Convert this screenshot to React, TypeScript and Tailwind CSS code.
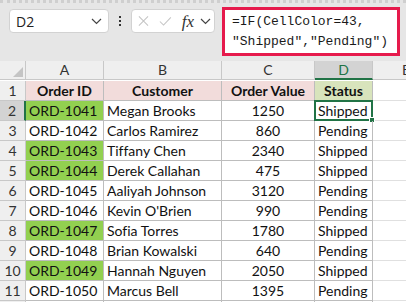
import React from 'react';

const rows = [
  { id: 'ORD-1041', name: 'Megan Brooks', value: 1250, status: 'Shipped', green: true },
  { id: 'ORD-1042', name: 'Carlos Ramirez', value: 860, status: 'Pending', green: false },
  { id: 'ORD-1043', name: 'Tiffany Chen', value: 2340, status: 'Shipped', green: true },
  { id: 'ORD-1044', name: 'Derek Callahan', value: 475, status: 'Shipped', green: true },
  { id: 'ORD-1045', name: 'Aaliyah Johnson', value: 3120, status: 'Pending', green: false },
  { id: 'ORD-1046', name: "Kevin O'Brien", value: 990, status: 'Pending', green: false },
  { id: 'ORD-1047', name: 'Sofia Torres', value: 1780, status: 'Shipped', green: true },
  { id: 'ORD-1048', name: 'Brian Kowalski', value: 640, status: 'Pending', green: false },
  { id: 'ORD-1049', name: 'Hannah Nguyen', value: 2050, status: 'Shipped', green: true },
  { id: 'ORD-1050', name: 'Marcus Bell', value: 1395, status: 'Pending', green: false },
];

const Chevron = () => (
  <svg width="11" height="7" viewBox="0 0 11 7" fill="none">
    <path d="M1 1l4.5 4.5L10 1" stroke="#444" strokeWidth="1.2" />
  </svg>
);

const FormulaBar = () => (
  <div className="h-[61px] bg-[#e6e6e6] border-t-[3px] border-dotted border-[#cfcfcf] flex items-start pl-[9px] pt-[1px]">
    {/* Name box */}
    <div className="mt-[5px] w-[100px] h-[24px] bg-white rounded-[4px] border border-[#d2d2d2] flex items-center justify-between pl-[6px] pr-[6px]">
      <span className="text-[14px] text-[#222] font-['Open_Sans',sans-serif]">D2</span>
      <Chevron />
    </div>

    {/* more dots */}
    <div className="w-[22px] h-[24px] mt-[5px] flex flex-col items-center justify-center gap-[2px]">
      <div className="w-[2px] h-[2px] bg-[#333]" />
      <div className="w-[2px] h-[2px] bg-[#333]" />
      <div className="w-[2px] h-[2px] bg-[#333]" />
    </div>

    {/* cancel / enter / fx */}
    <div className="mt-[5px] w-[84px] h-[24px] bg-white rounded-[4px] border border-[#d2d2d2] flex items-center pl-[6px] pr-[3px]">
      <svg width="12" height="12" viewBox="0 0 12 12" fill="none">
        <path d="M1 1l10 10M11 1L1 11" stroke="#c4c4c4" strokeWidth="1.1" />
      </svg>
      <svg width="14" height="11" viewBox="0 0 14 11" fill="none" className="ml-[10px]">
        <path d="M1 5.5l4 4L13 1" stroke="#c4c4c4" strokeWidth="1.1" />
      </svg>
      <span className="ml-[10px] text-[17px] italic text-[#333] font-['Liberation_Serif',serif] leading-none">fx</span>
      <div className="ml-[6px]">
        <Chevron />
      </div>
    </div>

    {/* formula */}
    <div className="ml-[7px] mt-[3px] w-[178px] h-[49px] bg-white border-[3px] border-[#e61a4c] pl-[7px] pt-[2px] font-['Liberation_Mono',monospace] text-[13px] leading-[20px] text-[#1a1a1a]">
      <div>=IF(CellColor=43,</div>
      <div>"Shipped","Pending")</div>
    </div>
  </div>
);

const cols = ['A', 'B', 'C', 'D', 'E'];

export default function App() {
  return (
    <div className="w-[406px] h-[302px] overflow-hidden bg-white font-['Lato',sans-serif] text-[14px] text-[#111] [font-variant-ligatures:none]">
      <FormulaBar />
      <div className="grid grid-cols-[26px_78px_118px_93px_58px_33px] auto-rows-[20px]">
        {/* column headers */}
        <div className="h-[19px] bg-[#efefef] border-r border-b border-[#c8c8c8] relative">
          <svg width="10" height="10" viewBox="0 0 10 10" className="absolute right-[2px] bottom-[2px]">
            <path d="M10 0v10H0z" fill="#c4c4c4" />
          </svg>
        </div>
        {cols.map((c) =>
          c === 'D' ? (
            <div key={c} className="h-[19px] bg-[#d3d3d3] border-r border-[#c8c8c8] border-b-2 border-b-[#217346] flex items-center justify-center text-[#217346] leading-none">
              {c}
            </div>
          ) : c === 'E' ? (
            <div key={c} className="h-[19px] bg-[#efefef] border-b border-[#c8c8c8] flex items-center justify-end text-[#333] leading-none overflow-hidden">
              <span className="-mr-[4px]">{c}</span>
            </div>
          ) : (
            <div key={c} className="h-[19px] bg-[#efefef] border-r border-b border-[#c8c8c8] flex items-center justify-center text-[#333] leading-none">
              {c}
            </div>
          )
        )}

        {/* row 1 */}
        <div className="bg-[#efefef] border-r border-b border-[#c8c8c8] flex items-center justify-center text-[#333]">1</div>
        <div className="bg-[#f2dcdb] border-r border-b border-[#bdbdbd] flex items-center justify-center font-bold">Order ID</div>
        <div className="bg-[#f2dcdb] border-r border-b border-[#bdbdbd] flex items-center justify-center font-bold">Customer</div>
        <div className="bg-[#f2dcdb] border-r border-b border-[#bdbdbd] flex items-center justify-center font-bold">Order Value</div>
        <div className="bg-[#d8e4bc] border-r border-b border-[#bdbdbd] flex items-center justify-center font-bold">Status</div>
        <div className="border-b border-[#e0e0e0]" />

        {rows.map((r, i) => {
          const n = i + 2;
          const selected = n === 2;
          return (
            <React.Fragment key={r.id}>
              <div
                className={`border-b border-[#c8c8c8] flex items-center justify-center text-[#333] ${
                  selected ? 'bg-[#d3d3d3] border-r-2 border-r-[#217346]' : 'bg-[#efefef] border-r'
                }`}
              >
                {n}
              </div>
              <div className={`border-r border-b border-[#bdbdbd] flex items-center pl-[3px] ${r.green ? 'bg-[#92d050]' : 'bg-white'}`}>
                {r.id}
              </div>
              <div className="border-r border-b border-[#bdbdbd] flex items-center pl-[3px] whitespace-nowrap">{r.name}</div>
              <div className="border-r border-b border-[#bdbdbd] flex items-center justify-center">{r.value}</div>
              <div className="relative border-r border-b border-[#bdbdbd] flex items-center pl-[3px]">
                {r.status}
                {selected && (
                  <div className="absolute -left-[1px] -top-[1px] -right-[1px] -bottom-[1px] border-2 border-[#217346]">
                    <div className="absolute -right-[4px] -bottom-[4px] w-[6px] h-[6px] bg-[#217346] border border-white" />
                  </div>
                )}
              </div>
              <div className="border-b border-[#e0e0e0]" />
            </React.Fragment>
          );
        })}

        {/* row 12 */}
        <div className="bg-[#efefef] border-r border-[#c8c8c8]" />
        <div className="border-r border-[#bdbdbd]" />
        <div className="border-r border-[#bdbdbd]" />
        <div className="border-r border-[#bdbdbd]" />
        <div className="border-r border-[#bdbdbd]" />
        <div />
      </div>
    </div>
  );
}
